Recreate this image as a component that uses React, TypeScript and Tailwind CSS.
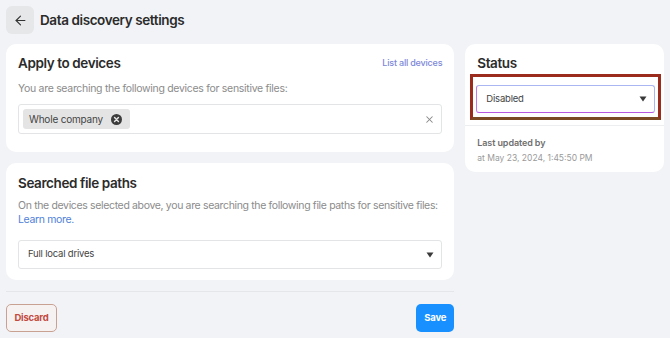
import { ArrowLeft, X } from 'lucide-react';

function Caret() {
  return (
    <svg width="8" height="6" viewBox="0 0 8 6" className="shrink-0">
      <path d="M0.5 0.5 L7.5 0.5 L4 5.5 Z" fill="#3a3a3a" />
    </svg>
  );
}

function XCircle() {
  return (
    <svg width="11" height="11" viewBox="0 0 12 12" className="shrink-0">
      <circle cx="6" cy="6" r="6" fill="#3c3c3c" />
      <path d="M3.9 3.9 L8.1 8.1 M8.1 3.9 L3.9 8.1" stroke="#e6e6e6" strokeWidth="1.6" strokeLinecap="round" />
    </svg>
  );
}

export default function App() {
  return (
    <div
      className="w-[670px] h-[338px] bg-[#f1f3f6] px-[6px] pt-[6px] text-[#2b2b2b] overflow-hidden"
      style={{ fontFamily: 'Inter, "Noto Sans", sans-serif' }}
    >
      {/* header */}
      <div className="flex items-center gap-[6px] h-[28px]">
        <button className="w-[28px] h-[28px] rounded-[6px] bg-[#e6e7e9] flex items-center justify-center">
          <ArrowLeft className="w-[15px] h-[15px] text-[#333]" strokeWidth={1.8} />
        </button>
        <h1 className="text-[13.5px] tracking-[-0.4px] font-semibold text-[#2b2b2b]">Data discovery settings</h1>
      </div>

      <div className="flex gap-[11px] mt-[10px]">
        {/* left column */}
        <div className="w-[449px] flex flex-col">
          <div className="bg-white rounded-[10px] px-[12px] pt-[9px] pb-[18px]">
            <div className="flex items-center justify-between h-[20px]">
              <h2 className="text-[13.5px] tracking-[-0.4px] font-semibold">Apply to devices</h2>
              <a className="text-[9px] tracking-[-0.2px] text-[#7d87d9] font-medium">List all devices</a>
            </div>
            <p className="mt-[8px] text-[10.5px] tracking-[-0.3px] leading-[16px] text-[#8b8b8b]">
              You are searching the following devices for sensitive files:
            </p>
            <div className="mt-[7px] h-[30px] border border-[#e3e4e6] rounded-[3px] flex items-center pl-[4px] pr-[6px]">
              <span className="h-[20px] rounded-[3px] bg-[#e4e4e4] flex items-center gap-[8px] pl-[6px] pr-[8px] text-[10px] tracking-[-0.2px] text-[#444]">
                Whole company
                <XCircle />
              </span>
              <X className="ml-auto w-[11px] h-[11px] text-[#888]" strokeWidth={2.2} />
            </div>
          </div>

          <div className="bg-white rounded-[10px] px-[12px] pt-[10px] pb-[11px] mt-[11px]">
            <h2 className="text-[13.5px] tracking-[-0.4px] font-semibold leading-[20px]">Searched file paths</h2>
            <p className="mt-[6px] text-[10.5px] tracking-[-0.35px] leading-[14px] text-[#8b8b8b]">
              <span className="whitespace-nowrap">
                On the devices selected above, you are searching the following file paths for sensitive files:
              </span>
              <br />
              <a className="text-[#4f7fd9]">Learn more.</a>
            </p>
            <div className="mt-[13px] h-[29px] border border-[#e3e4e6] rounded-[3px] flex items-center pl-[9px] pr-[7px] text-[9.5px] tracking-[-0.2px] text-[#444]">
              Full local drives
              <span className="ml-auto"><Caret /></span>
            </div>
          </div>

          <div className="mt-[11px] border-t border-[#e4e6e9]" />
          <div className="flex items-center justify-between mt-[12px]">
            <button className="h-[28px] w-[51px] rounded-[5px] border border-[#c9a193] bg-[#f7f2f2] text-[9.5px] tracking-[-0.2px] font-bold text-[#c24a3e]">
              Discard
            </button>
            <button className="h-[28px] w-[38px] rounded-[5px] bg-[#1890ff] text-[9.5px] tracking-[-0.2px] font-bold text-white">
              Save
            </button>
          </div>
        </div>

        {/* right column */}
        <div className="w-[199px] self-start bg-white rounded-[10px] pb-[7px]">
          <h2 className="px-[12px] pt-[9px] text-[13.5px] tracking-[-0.4px] font-semibold leading-[20px]">Status</h2>
          <div className="ml-[5px] mr-[3px] mt-[1px] border-[3px] border-[#9a2b1d] border-b-[#7a4a25] pt-[8px] pb-[4px] px-[3px]">
            <div className="h-[28px] rounded-[3px] border border-[#a9b6f2] border-b-[#b859e3] border-l-[#c07ae8] flex items-center pl-[9px] pr-[7px] text-[9.5px] tracking-[-0.2px] text-[#444]">
              Disabled
              <span className="ml-auto"><Caret /></span>
            </div>
          </div>
          <div className="mt-[5px] border-t border-[#eceef0]" />
          <div className="px-[12px] pt-[10px]">
            <p className="text-[9px] tracking-[-0.1px] font-semibold text-[#6f6f6f] leading-[14px]">Last updated by</p>
            <p className="mt-[1px] text-[8.5px] text-[#9a9a9a] leading-[14px]">at May 23, 2024, 1:45:50 PM</p>
          </div>
        </div>
      </div>
    </div>
  );
}
